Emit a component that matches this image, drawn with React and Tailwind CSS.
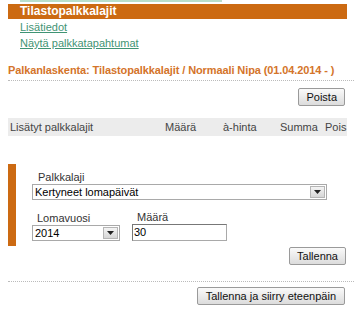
import React from 'react';

const font = { fontFamily: '"Liberation Sans", Arial, sans-serif' };

function Button({ children, className = '' }) {
  return (
    <button
      className={
        'h-[18px] px-[7px] text-[11px] leading-none text-[#111] border border-[#9a9a9a] rounded-[2px] bg-gradient-to-b from-[#fafafa] to-[#dcdcdc] ' +
        className
      }
    >
      {children}
    </button>
  );
}

function SelectBox({ value, className = '' }) {
  return (
    <div className={'h-[16px] flex items-stretch bg-white border border-[#a9a9a9] ' + className}>
      <span className="flex-1 pl-[2px] text-[11px] leading-[14px] text-black">{value}</span>
      <span className="w-[15px] m-[1px] flex items-center justify-center bg-gradient-to-b from-[#f4f4f4] to-[#d6d6d6] border border-[#b5b5b5]">
        <svg width="7" height="4" viewBox="0 0 7 4">
          <path d="M0 0h7L3.5 4z" fill="#222" />
        </svg>
      </span>
    </div>
  );
}

export default function App() {
  return (
    <div className="w-[356px] h-[327px] bg-white overflow-hidden" style={font}>
      <div className="ml-[20px] w-[202px] h-[2px] bg-[#b9dfcb]" />

      <div className="mt-[2px] ml-[8px] w-[339px] h-[15px] bg-[#cc6a12] pl-[12px] text-[12px] leading-[15px] font-bold text-white">
        Tilastopalkkalajit
      </div>

      <div className="pl-[20px] text-[11px] leading-[16px] text-[#3f9474]">
        <div>
          <a className="underline underline-offset-1">Lisätiedot</a>
        </div>
        <div>
          <a className="underline underline-offset-1">Näytä palkkatapahtumat</a>
        </div>
      </div>

      <h2 className="mt-[11px] pl-[8px] text-[11px] leading-[16px] font-bold text-[#d4742a] whitespace-nowrap tracking-[-0.1px]">
        Palkanlaskenta: Tilastopalkkalajit / Normaali Nipa (01.04.2014 - )
      </h2>
      <div className="mt-[2px] ml-[8px] w-[346px] border-t border-dotted border-[#bbbbbb]" />

      <div className="mt-[7px] flex justify-end pr-[11px]">
        <Button>Poista</Button>
      </div>

      <div className="mt-[12px] ml-[8px] w-[339px] h-[18px] bg-[#ececec] flex items-center text-[11px] text-[#444] whitespace-nowrap">
        <span className="w-[157px] shrink-0 pl-[2px]">Lisätyt palkkalajit</span>
        <span className="w-[58px] shrink-0">Määrä</span>
        <span className="w-[57px] shrink-0">à-hinta</span>
        <span className="w-[45px] shrink-0">Summa</span>
        <span className="shrink-0">Pois</span>
      </div>

      <div className="mt-[28px] ml-[8px] flex">
        <div className="w-[8px] bg-[#cc6a12]" />
        <div className="ml-[16px] pt-[6px] pb-[5px] text-[11px] text-[#333]">
          <div className="pl-[6px] leading-[14px]">Palkkalaji</div>
          <SelectBox value="Kertyneet lomapäivät" className="w-[295px]" />
          <div className="mt-[11px] flex">
            <div className="w-[88px]">
              <div className="pl-[5px] leading-[14px]">Lomavuosi</div>
              <SelectBox value="2014" />
            </div>
            <div className="ml-[12px] w-[95px]">
              <div className="pl-[5px] leading-[13px]">Määrä</div>
              <div className="h-[17px] bg-white border border-[#a9a9a9] border-t-[#777] border-l-[#777] pl-[1px] text-[11px] leading-[15px] text-black">
                30
              </div>
            </div>
          </div>
        </div>
      </div>

      <div className="mt-[1px] flex justify-end pr-[10px]">
        <Button>Tallenna</Button>
      </div>

      <div className="mt-[16px] ml-[8px] w-[346px] border-t border-dotted border-[#bbbbbb]" />

      <div className="mt-[5px] flex justify-end pr-[11px]">
        <Button className="px-[8px]">Tallenna ja siirry eteenpäin</Button>
      </div>
    </div>
  );
}
